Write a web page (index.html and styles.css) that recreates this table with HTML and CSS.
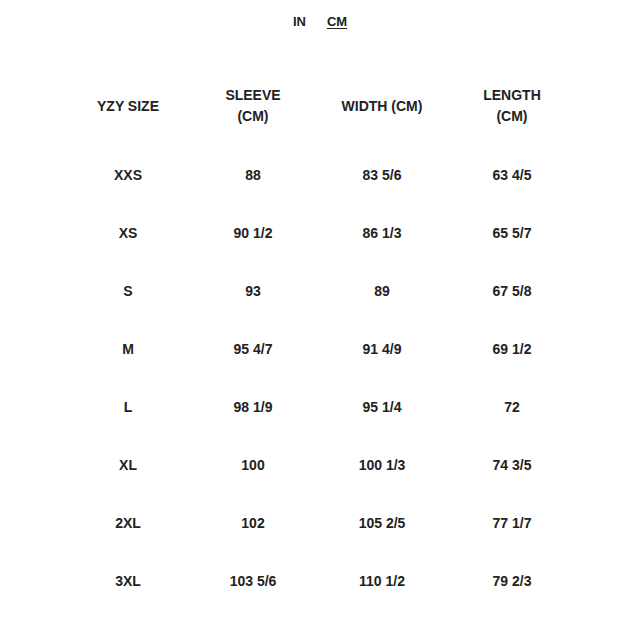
FILE: index.html
```html
<!DOCTYPE html>
<html lang="en">
<head>
<meta charset="utf-8">
<title>YZY Size Chart</title>
<link rel="stylesheet" href="styles.css">
</head>
<body>
<main class="sheet">
  <nav class="units">
    <span class="unit">IN</span>
    <span class="unit unit-active">CM</span>
  </nav>
  <section class="chart">
    <div class="row row-head">
      <div class="cell c1">YZY SIZE</div>
      <div class="cell c2">SLEEVE<br>(CM)</div>
      <div class="cell c3">WIDTH (CM)</div>
      <div class="cell c4">LENGTH<br>(CM)</div>
    </div>
    <div class="row"><div class="cell c1">XXS</div><div class="cell c2">88</div><div class="cell c3">83 5/6</div><div class="cell c4">63 4/5</div></div>
    <div class="row"><div class="cell c1">XS</div><div class="cell c2">90 1/2</div><div class="cell c3">86 1/3</div><div class="cell c4">65 5/7</div></div>
    <div class="row"><div class="cell c1">S</div><div class="cell c2">93</div><div class="cell c3">89</div><div class="cell c4">67 5/8</div></div>
    <div class="row"><div class="cell c1">M</div><div class="cell c2">95 4/7</div><div class="cell c3">91 4/9</div><div class="cell c4">69 1/2</div></div>
    <div class="row"><div class="cell c1">L</div><div class="cell c2">98 1/9</div><div class="cell c3">95 1/4</div><div class="cell c4">72</div></div>
    <div class="row"><div class="cell c1">XL</div><div class="cell c2">100</div><div class="cell c3">100 1/3</div><div class="cell c4">74 3/5</div></div>
    <div class="row"><div class="cell c1">2XL</div><div class="cell c2">102</div><div class="cell c3">105 2/5</div><div class="cell c4">77 1/7</div></div>
    <div class="row"><div class="cell c1">3XL</div><div class="cell c2">103 5/6</div><div class="cell c3">110 1/2</div><div class="cell c4">79 2/3</div></div>
  </section>
</main>
</body>
</html>
```

FILE: styles.css
```css
html, body {
  margin: 0;
  padding: 0;
  background: #ffffff;
}

body {
  font-family: "Liberation Sans", Arial, sans-serif;
  font-weight: bold;
  font-size: 14px;
  color: #222222;
}

.sheet {
  width: 640px;
  height: 640px;
  overflow: hidden;
}

.units {
  display: flex;
  justify-content: center;
  gap: 21px;
  height: 44px;
  line-height: 44px;
  font-size: 13px;
}

.unit-active {
  text-decoration: underline;
  text-underline-offset: 2px;
}

.chart {
  margin-top: 33px;
  padding-left: 64px;
}

.row {
  display: grid;
  grid-template-columns: 128px 122px 136px 124px;
  height: 58px;
  align-items: center;
}

.row-head {
  margin-bottom: 11px;
  line-height: 21px;
}

.cell {
  text-align: center;
}
```
